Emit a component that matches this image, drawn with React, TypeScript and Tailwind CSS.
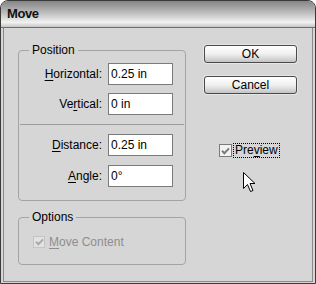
import React from "react";

function U({ children }: { children: React.ReactNode }) {
  return <span className="underline underline-offset-[2px] decoration-1">{children}</span>;
}

function Row({ label, value }: { label: React.ReactNode; value: string }) {
  return (
    <div className="flex items-center h-[22px]">
      <div className="w-[89px] pr-[6px] text-right leading-[14px]">{label}</div>
      <div className="w-[65px] h-[22px] bg-white border border-[#7b7b7b] pl-[2px] flex items-center leading-[14px]">
        {value}
      </div>
    </div>
  );
}

function Check({ disabled }: { disabled?: boolean }) {
  return (
    <div
      className={
        disabled
          ? "w-[12px] h-[12px] border border-[#c4c4c4] bg-[#e2e2e2] flex items-center justify-center"
          : "w-[13px] h-[13px] border border-[#7a7a7a] bg-[#f2f2f2] flex items-center justify-center"
      }
    >
      <svg width="9" height="8" viewBox="0 0 9 8">
        <path
          d="M1 3.8 L3.4 6.2 L8 1.4"
          fill="none"
          stroke={disabled ? "#a9a9a9" : "#7a7a7a"}
          strokeWidth="2"
        />
      </svg>
    </div>
  );
}

function Btn({ children }: { children: React.ReactNode }) {
  return (
    <div className="w-[93px] h-[18px] rounded-[3px] border border-[#4a4a4a] bg-gradient-to-b from-[#ffffff] via-[#f0f0f0] to-[#c4c4c4] flex items-center justify-center leading-[14px] shadow-[0_0_0_1px_#e6e6e6]">
      {children}
    </div>
  );
}

export default function App() {
  return (
    <div
      className="relative w-[316px] h-[284px] flex flex-col border border-[#3a3a3a] rounded-t-[8px] overflow-hidden bg-[#d6d6d6] text-[12px] text-black"
      style={{ fontFamily: '"Liberation Sans", Arial, sans-serif' }}
    >
      <div className="h-[27px] shrink-0 border-b border-[#6e6e6e] bg-[linear-gradient(to_bottom,#858585_0%,#a9a9a9_30%,#d2d2d2_60%,#f2f2f2_82%,#c6c6c6_100%)] flex items-center pl-[6px]">
        <span className="font-bold text-[13px] tracking-[-0.4px] text-[#111]">Move</span>
      </div>
      <div className="flex-1 mx-[2px] mb-[1px] border-x border-b border-[#8a8a8a] flex pt-[15px] pl-[14px]">
        <div className="w-[168px] flex flex-col">
          <fieldset className="border border-[#a4a4a4] rounded-[4px] pb-[13px]">
            <legend className="ml-[10px] px-[3px] leading-[14px]">Position</legend>
            <div className="flex flex-col">
              <div className="mt-[6px]">
                <Row label={<><U>H</U>orizontal:</>} value="0.25 in" />
              </div>
              <div className="mt-[8px]">
                <Row label={<>Ve<U>r</U>tical:</>} value="0 in" />
              </div>
              <div className="mt-[9px] mx-[1px] h-px bg-[#9c9c9c]" />
              <div className="mt-[9px]">
                <Row label={<><U>D</U>istance:</>} value="0.25 in" />
              </div>
              <div className="mt-[9px]">
                <Row label={<><U>A</U>ngle:</>} value="0°" />
              </div>
            </div>
          </fieldset>
          <fieldset className="mt-[9px] border border-[#a4a4a4] rounded-[4px] pb-[15px]">
            <legend className="ml-[10px] px-[3px] leading-[14px]">Options</legend>
            <div className="mt-[11px] flex items-center h-[14px] pl-[14px] gap-[4px] text-[#8e8e8e]">
              <Check disabled />
              <span className="leading-[14px]">
                <U>M</U>ove Content
              </span>
            </div>
          </fieldset>
        </div>
        <div className="ml-[18px] flex flex-col pt-[2px]">
          <Btn>OK</Btn>
          <div className="mt-[13px]">
            <Btn>Cancel</Btn>
          </div>
          <div className="mt-[49px] ml-[15px] flex items-center">
            <Check />
            <span className="ml-[1px] border border-dotted border-black px-[1px] leading-[13px]">
              Pre<U>v</U>iew
            </span>
          </div>
        </div>
      </div>
      <svg
        className="absolute left-[242px] top-[171px]"
        width="13"
        height="21"
        viewBox="0 0 13 21"
      >
        <path
          d="M0.5 0.5 L0.5 16.5 L4.5 12.5 L7.5 19.5 L10 18.5 L7 11.5 L12 11.5 Z"
          fill="#fff"
          stroke="#000"
          strokeWidth="1"
          strokeLinejoin="miter"
        />
      </svg>
    </div>
  );
}
